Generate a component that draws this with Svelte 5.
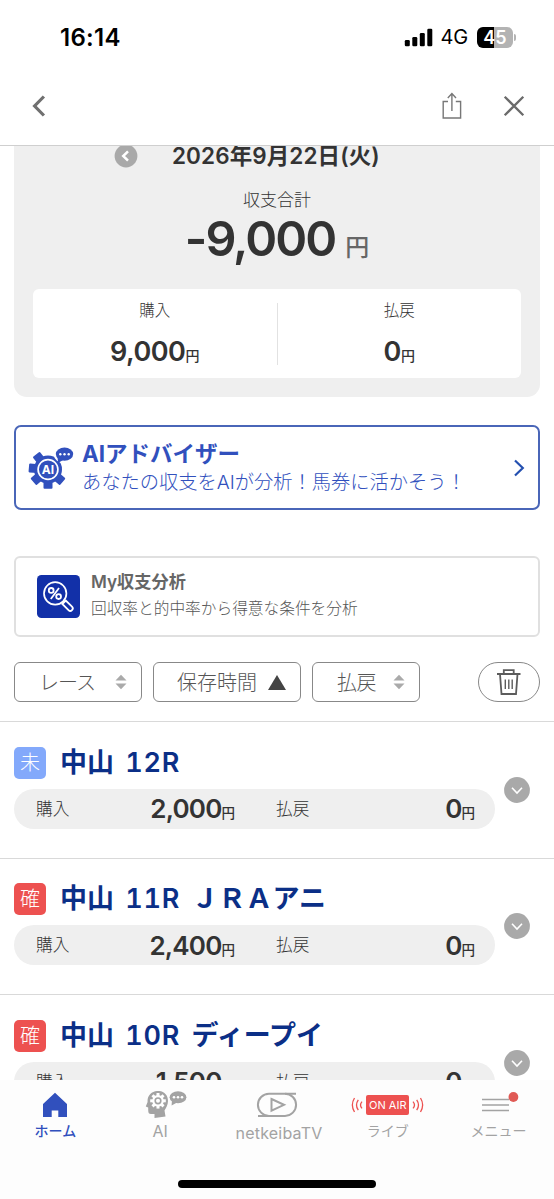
<script lang="ts">
   type Race = {
      status: "未" | "確";
      venue: string;
      number: string;
      title: string;
      bought: string;
      refund: string;
   };

   type Filter = { text: string; active: boolean; size: string };

   const filters: Filter[] = [
      { text: "レース", active: false, size: "course" },
      { text: "保存時間", active: true, size: "time" },
      { text: "払戻", active: false, size: "refund" },
   ];

   const races: Race[] = [
      { status: "未", venue: "中山", number: "12R", title: "", bought: "2,000", refund: "0" },
      { status: "確", venue: "中山", number: "11R", title: "ＪＲＡアニ", bought: "2,400", refund: "0" },
      { status: "確", venue: "中山", number: "10R", title: "ディープイ", bought: "1,500", refund: "0" },
   ];

   const advisorTeeth: number[] = [130, 180, 230, 275, 322];
   const headTeeth: number[] = [0, 45, 90, 135, 180, 225, 270, 315];
</script>

<div class="screen">
   <div class="status-bar">
      <span class="clock">16:14</span>
      <div class="status-icons">
         <svg width="29" height="19" viewBox="0 0 29 19">
            <rect x="0.8" y="12" width="5" height="6.3" rx="1.3" />
            <rect x="8.3" y="9" width="5" height="9.3" rx="1.3" />
            <rect x="15.8" y="5" width="5" height="13.3" rx="1.3" />
            <rect x="23.3" y="0.7" width="5" height="17.6" rx="1.3" />
         </svg>
         <span class="network">4G</span>
         <div class="battery"><span>45</span></div>
         <i class="battery-tip"></i>
      </div>
   </div>

   <header>
      <svg class="back" width="14" height="22" viewBox="0 0 14 22">
         <path d="M11.9 1.5 L2.6 11 L11.9 20.5" fill="none" stroke="#707070" stroke-width="3.2" />
      </svg>
      <svg class="share" width="20" height="28" viewBox="0 0 20 28">
         <path
            d="M6 9.5 H1.2 V26 H18.6 V9.5 H13.8 M9.9 19 V2 M5.8 6 L9.9 1.6 L14 6"
            fill="none"
            stroke="#777"
            stroke-width="1.4"
         />
      </svg>
      <svg class="close" width="22" height="22" viewBox="0 0 22 22">
         <path d="M1.7 1.7 L20.3 20.3 M20.3 1.7 L1.7 20.3" fill="none" stroke="#6b6b6b" stroke-width="2.3" />
      </svg>
   </header>

   <main>
      <section class="summary">
         <div class="date-row">
            <svg width="24" height="24" viewBox="0 0 24 24">
               <circle cx="12" cy="12" r="11.4" fill="#a9a9a9" />
               <path d="M14 7.3 L9.2 12 L14 16.7" fill="none" stroke="#fff" stroke-width="2.5" />
            </svg>
            <span class="date">2026年9月22日(火)</span>
         </div>
         <div class="total-label">収支合計</div>
         <div class="total"><b>-9,000</b><span>円</span></div>
         <div class="breakdown">
            <div class="breakdown-item">
               <span>購入</span>
               <p><b>9,000</b>円</p>
            </div>
            <div class="breakdown-item">
               <span>払戻</span>
               <p><b>0</b>円</p>
            </div>
         </div>
      </section>

      <section class="advisor">
         <svg width="46" height="44" viewBox="0 0 46 44">
            <g fill="#3150bd">
               <circle cx="20" cy="23.5" r="14" />
               {#each advisorTeeth as angle}
                  <rect x="15.5" y="4.3" width="9" height="10" rx="1" transform="rotate({angle} 20 23.5)" />
               {/each}
               <ellipse cx="36.5" cy="8.7" rx="10.6" ry="8.6" fill="#fff" />
               <ellipse cx="36.5" cy="8.1" rx="8.7" ry="6.6" />
               <path d="M29.5 10 L30 17 L36 13.5 Z" />
            </g>
            <circle cx="20" cy="23.5" r="9.9" fill="none" stroke="#fff" stroke-width="1.7" />
            <text x="20" y="27.7" text-anchor="middle" font-size="12" font-weight="700" fill="#fff">AI</text>
            <g fill="#fff">
               <circle cx="32.3" cy="8.2" r="1.2" />
               <circle cx="36.5" cy="8.2" r="1.2" />
               <circle cx="40.7" cy="8.2" r="1.2" />
            </g>
         </svg>
         <div class="advisor-text">
            <strong>AIアドバイザー</strong>
            <span>あなたの収支をAIが分析！馬券に活かそう！</span>
         </div>
         <svg width="12" height="18" viewBox="0 0 12 18">
            <path d="M2 1.5 L9.8 9 L2 16.5" fill="none" stroke="#2450b0" stroke-width="2.2" />
         </svg>
      </section>

      <section class="analysis">
         <svg width="43" height="43" viewBox="0 0 43 43">
            <rect width="43" height="43" rx="4.5" fill="#1230a8" />
            <g fill="none" stroke="#fff">
               <circle cx="18.2" cy="18.4" r="11.2" stroke-width="1.7" />
               <circle cx="14.2" cy="15.4" r="2.4" stroke-width="1.8" />
               <circle cx="21.6" cy="21.6" r="2.4" stroke-width="1.8" />
               <path d="M22 13 L13.8 24" stroke-width="1.8" />
               <path d="M25.3 29 L28.8 25.5 L35 31.7 A2.4 2.4 0 0 1 31.5 35.2 Z" stroke-width="1.8" />
            </g>
         </svg>
         <div class="analysis-text">
            <strong>My収支分析</strong>
            <span>回収率と的中率から得意な条件を分析</span>
         </div>
      </section>

      <div class="filters">
         {#each filters as { text, active, size }}
            <button class="filter {size}">
               <span>{text}</span>
               {#if active}
                  <svg width="18" height="15" viewBox="0 0 18 15"><path d="M9 0 L18 15 H0 Z" fill="#444" /></svg>
               {:else}
                  <svg width="12" height="16" viewBox="0 0 12 16">
                     <path d="M6 0.7 L11.5 6.5 H0.5 Z M6 15.3 L11.5 9.5 H0.5 Z" fill="#aaa" />
                  </svg>
               {/if}
            </button>
         {/each}
         <button class="trash" aria-label="trash">
            <svg width="26" height="28" viewBox="0 0 26 28">
               <g fill="none" stroke="#5c5c5c">
                  <path d="M1 6 H24.5 M7.8 6 V2.2 H17.7 V6 M4 6 L5.5 26 H20 L21.5 6" stroke-width="1.8" />
                  <path d="M9.3 11.5 V21 M12.8 11.5 V21 M16.2 11.5 V21" stroke-width="1.4" />
               </g>
            </svg>
         </button>
      </div>

      {#each races as race}
         <article>
            <div class="race-body">
               <div class="race-title">
                  <span class="badge" class:settled={race.status === "確"}>{race.status}</span>
                  <h2>{race.venue} <span>{race.number}</span> {race.title}</h2>
               </div>
               <div class="race-money">
                  <span>購入</span>
                  <p><b>{race.bought}</b>円</p>
                  <span class="refund-label">払戻</span>
                  <p><b>{race.refund}</b>円</p>
               </div>
            </div>
            <svg width="26" height="26" viewBox="0 0 26 26">
               <circle cx="13" cy="13" r="12.9" fill="#a9a9a9" />
               <path d="M8 10.8 L13 16 L18 10.8" fill="none" stroke="#fff" stroke-width="1.6" />
            </svg>
         </article>
      {/each}
   </main>

   <nav>
      <div class="tabs">
         <div class="tab current">
            <svg width="26" height="26" viewBox="0 0 26 26">
               <path d="M13 0.8 L25 12 V25 H16.3 V18.5 H9.7 V25 H1 V12 Z" fill="#3150bd" />
            </svg>
            <span>ホーム</span>
         </div>
         <div class="tab ai">
            <svg width="42" height="28" viewBox="0 0 42 28">
               <path
                  d="M12 0 C19 -0.5 23 4 23 10 C23 14 21 17 19.5 19.5 L20.5 25.5 L9.5 27 V23 H6 C4 23 3.2 22 3.2 19 V16.5 L0.8 15.5 L2.6 11 C2 5 6.5 0.4 12 0 Z"
                  fill="#a3a3a3"
               />
               <g transform="translate(13 9.8)">
                  {#each headTeeth as angle}
                     <rect x="-1.5" y="-7.8" width="3" height="4" fill="#fff" transform="rotate({angle})" />
                  {/each}
                  <circle r="5.8" fill="#fff" />
                  <circle r="2.8" fill="none" stroke="#a3a3a3" stroke-width="1.6" />
               </g>
               <ellipse cx="33" cy="6.2" rx="8.4" ry="6" fill="#a3a3a3" />
               <path d="M27 9 L26.6 14.5 L33 11 Z" fill="#a3a3a3" />
               <g fill="#fff">
                  <circle cx="29" cy="6.2" r="1.3" />
                  <circle cx="33" cy="6.2" r="1.3" />
                  <circle cx="37" cy="6.2" r="1.3" />
               </g>
            </svg>
            <span>AI</span>
         </div>
         <div class="tab tv">
            <svg width="42" height="26" viewBox="0 0 42 26">
               <g fill="none" stroke="#a3a3a3" stroke-width="2">
                  <path d="M40 1.7 H13 A11.1 11.1 0 0 0 13 23.9" />
                  <path d="M2 23.9 H29 A11.1 11.1 0 0 0 29 1.7" />
                  <path d="M15.5 7 L28 12.8 L15.5 18.6 Z" />
               </g>
            </svg>
            <span>netkeibaTV</span>
         </div>
         <div class="tab live">
            <div class="on-air">
               <svg width="12" height="16" viewBox="0 0 12 16">
                  <path
                     d="M3.5 1 Q-0.8 8 3.5 15 M7.3 2.8 Q3.7 8 7.3 13.2 M11 4.6 Q8 8 11 11.4"
                     fill="none"
                     stroke="#ed5150"
                     stroke-width="1.3"
                  />
               </svg>
               <b>ON AIR</b>
               <svg width="12" height="16" viewBox="0 0 12 16">
                  <path
                     d="M8.5 1 Q12.8 8 8.5 15 M4.7 2.8 Q8.3 8 4.7 13.2 M1 4.6 Q4 8 1 11.4"
                     fill="none"
                     stroke="#ed5150"
                     stroke-width="1.3"
                  />
               </svg>
            </div>
            <span>ライブ</span>
         </div>
         <div class="tab menu">
            <svg width="40" height="26" viewBox="0 0 40 26">
               <path d="M3 7.5 H30 M3 13 H30 M3 18.5 H30" stroke="#a3a3a3" stroke-width="1.6" />
               <circle cx="34.4" cy="5" r="4.9" fill="#e05a55" />
            </svg>
            <span>メニュー</span>
         </div>
      </div>
      <div class="home-indicator"></div>
   </nav>
</div>

<style>
   :global(body) {
      background: #fff;
   }

   .screen {
      box-sizing: border-box;
      display: flex;
      flex-direction: column;
      width: 554px;
      height: 1199px;
      overflow: hidden;
      background: #fff;
      color: #333;
      font-family: Inter, "Noto Sans CJK JP", sans-serif;
      white-space: nowrap;
   }

   .screen :global(*) {
      box-sizing: border-box;
   }

   svg {
      flex: none;
      display: block;
   }

   p,
   h2 {
      margin: 0;
   }

   .status-bar {
      display: flex;
      justify-content: space-between;
      align-items: center;
      flex: none;
      height: 74px;
      padding: 0 38px 0 60px;
      color: #000;
   }

   .clock {
      font-size: 24px;
      font-weight: 600;
      letter-spacing: 0.3px;
   }

   .status-icons {
      display: flex;
      align-items: center;
   }

   .network {
      margin-left: 8px;
      font-size: 20px;
      letter-spacing: -0.2px;
   }

   .battery {
      display: flex;
      justify-content: center;
      align-items: center;
      width: 36px;
      height: 21px;
      margin-left: 9px;
      border-radius: 6px;
      background: linear-gradient(to right, #000 46%, #b3b3b3 46%);
      color: #fff;
      font-size: 18px;
      font-weight: 600;
   }

   .battery-tip {
      width: 2px;
      height: 7px;
      margin-left: 1px;
      border-radius: 0 2px 2px 0;
      background: #b3b3b3;
   }

   header {
      display: flex;
      align-items: center;
      flex: none;
      height: 72px;
      padding: 0 29px 8px 32px;
      border-bottom: 1px solid #cfcfcf;
   }

   .share {
      margin-left: auto;
   }

   .close {
      margin-left: 41px;
   }

   main {
      display: flex;
      flex-direction: column;
      flex: 1;
      min-height: 0;
      overflow: hidden;
   }

   main > * {
      flex: none;
   }

   .summary {
      height: 251px;
      margin: 0 14px;
      padding: 0 19px;
      border-radius: 0 0 13px 13px;
      background: #efefef;
      text-align: center;
   }

   .date-row {
      display: flex;
      align-items: center;
      height: 20px;
      padding-left: 81px;
   }

   .date {
      margin: -4px 0 0 34px;
      font-size: 22.5px;
      font-weight: 600;
      letter-spacing: 0.1px;
   }

   .total-label {
      margin-top: 24px;
      color: #333;
      font-size: 17px;
      font-weight: 300;
      line-height: 21px;
   }

   .total {
      display: flex;
      justify-content: center;
      align-items: baseline;
      height: 60px;
      line-height: 56px;
   }

   .total b {
      font-size: 48.5px;
      font-weight: 600;
      letter-spacing: -2px;
   }

   .total span {
      margin-left: 10px;
      color: #666;
      font-size: 24px;
      font-weight: 500;
   }

   .breakdown {
      display: flex;
      align-items: center;
      height: 89px;
      margin-top: 18px;
      border-radius: 6px;
      background: #fff;
   }

   .breakdown-item {
      flex: 1;
      height: 62px;
   }

   .breakdown-item + .breakdown-item {
      border-left: 1px solid #e2e2e2;
   }

   .breakdown-item span {
      display: block;
      font-size: 15.5px;
      font-weight: 300;
      line-height: 16px;
   }

   .breakdown-item p {
      margin-top: 14px;
      font-size: 14px;
      font-weight: 500;
      line-height: 38px;
   }

   .breakdown-item b {
      font-size: 27px;
      font-weight: 600;
      letter-spacing: -0.5px;
   }

   .advisor {
      display: flex;
      align-items: center;
      height: 85px;
      margin: 28px 14px 0;
      padding: 0 13px 0 12px;
      border: 2px solid #4a66b8;
      border-radius: 7px;
      color: #3150bd;
   }

   .advisor-text {
      flex: 1;
      margin-left: 8px;
   }

   .advisor-text strong {
      display: block;
      font-size: 22.5px;
      line-height: 28px;
   }

   .advisor-text span {
      display: block;
      font-size: 19.25px;
      font-weight: 300;
      line-height: 28px;
   }

   .analysis {
      display: flex;
      align-items: center;
      height: 81px;
      margin: 46px 14px 0;
      padding-left: 21px;
      border: 2px solid #e0e0e0;
      border-radius: 6px;
      color: #666;
   }

   .analysis-text {
      margin: -2px 0 0 11px;
   }

   .analysis-text strong {
      display: block;
      font-size: 17.2px;
      font-weight: 600;
      line-height: 26px;
   }

   .analysis-text span {
      display: block;
      color: #555;
      font-size: 15.7px;
      font-weight: 300;
      line-height: 27px;
   }

   .filters {
      display: flex;
      gap: 11px;
      height: 84px;
      padding: 25px 14px 0;
   }

   button {
      display: flex;
      align-items: center;
      height: 40px;
      padding: 0;
      border: 1.5px solid #888;
      border-radius: 6px;
      background: #fff;
      color: #555;
      font: 300 20px Inter, "Noto Sans CJK JP", sans-serif;
   }

   .filter {
      justify-content: space-between;
   }

   .filter span {
      margin-top: -2px;
   }

   .course {
      width: 128px;
      padding: 0 14px 0 24px;
      letter-spacing: -1px;
   }

   .time {
      width: 148px;
      padding: 0 14px 0 23px;
   }

   .refund {
      width: 108px;
      padding: 0 14px 0 24px;
      letter-spacing: -0.5px;
   }

   .trash {
      justify-content: center;
      width: 62px;
      margin-left: auto;
      border-radius: 21px;
   }

   article {
      display: flex;
      align-items: center;
      width: 554px;
      height: 136.5px;
      padding-left: 14px;
      border-top: 1.5px solid #d9d9d9;
   }

   .race-body {
      width: 481px;
      margin: 0 9px 4px 0;
   }

   .race-title {
      display: flex;
      align-items: center;
      height: 32px;
   }

   .badge {
      width: 32px;
      height: 32px;
      border-radius: 5px;
      background: #83a9fb;
      color: #fff;
      font-size: 20px;
      font-weight: 300;
      line-height: 33px;
      text-align: center;
   }

   .badge.settled {
      background: #ed5150;
   }

   h2 {
      margin-left: 14px;
      color: #0b2f87;
      font-size: 27px;
      font-weight: 600;
      line-height: 34px;
      word-spacing: 4.5px;
   }

   h2 span {
      font-variant-numeric: tabular-nums;
      letter-spacing: 0.8px;
   }

   .race-money {
      display: flex;
      align-items: center;
      height: 40px;
      margin-top: 10px;
      padding: 0 20px 0 22px;
      border-radius: 20px;
      background: #efefef;
      font-size: 16.7px;
   }

   .race-money span {
      margin-top: -2px;
      font-weight: 300;
   }

   .race-money p {
      flex: 1;
      font-size: 13.5px;
      font-weight: 500;
      text-align: right;
   }

   .race-money b {
      font-size: 26px;
      font-weight: 600;
      letter-spacing: -0.8px;
   }

   .race-money .refund-label {
      margin-left: 41px;
   }

   nav {
      display: flex;
      flex-direction: column;
      justify-content: space-between;
      align-items: center;
      flex: none;
      height: 119px;
      padding-bottom: 11px;
      background: #fdfdfd;
   }

   .tabs {
      display: flex;
      width: 554px;
      padding-top: 12px;
   }

   .tab {
      display: flex;
      flex: 1 1 0;
      flex-direction: column;
      align-items: center;
      min-width: 0;
      color: #a3a3a3;
      font-size: 14px;
   }

   .tab > svg {
      height: 26px;
   }

   .tab > span {
      margin-top: 3px;
      line-height: 20px;
   }

   .tab.current {
      color: #3150bd;
      font-weight: 500;
   }

   .tab.ai > svg {
      height: 28px;
      margin: -1px 0 -1px;
   }

   .tab.ai > span {
      margin-right: 12px;
      font-size: 16px;
   }

   .tab.tv > span {
      margin: 5px 0 0 4px;
      font-size: 16px;
      letter-spacing: 0.2px;
   }

   .on-air {
      display: flex;
      align-items: center;
      gap: 3px;
      height: 26px;
   }

   .on-air b {
      width: 43px;
      height: 20px;
      border-radius: 2px;
      background: #ed5150;
      color: #fff;
      font-size: 11px;
      font-weight: 400;
      line-height: 21px;
      text-align: center;
   }

   .home-indicator {
      width: 198px;
      height: 8px;
      border-radius: 4px;
      background: #000;
   }
</style>
